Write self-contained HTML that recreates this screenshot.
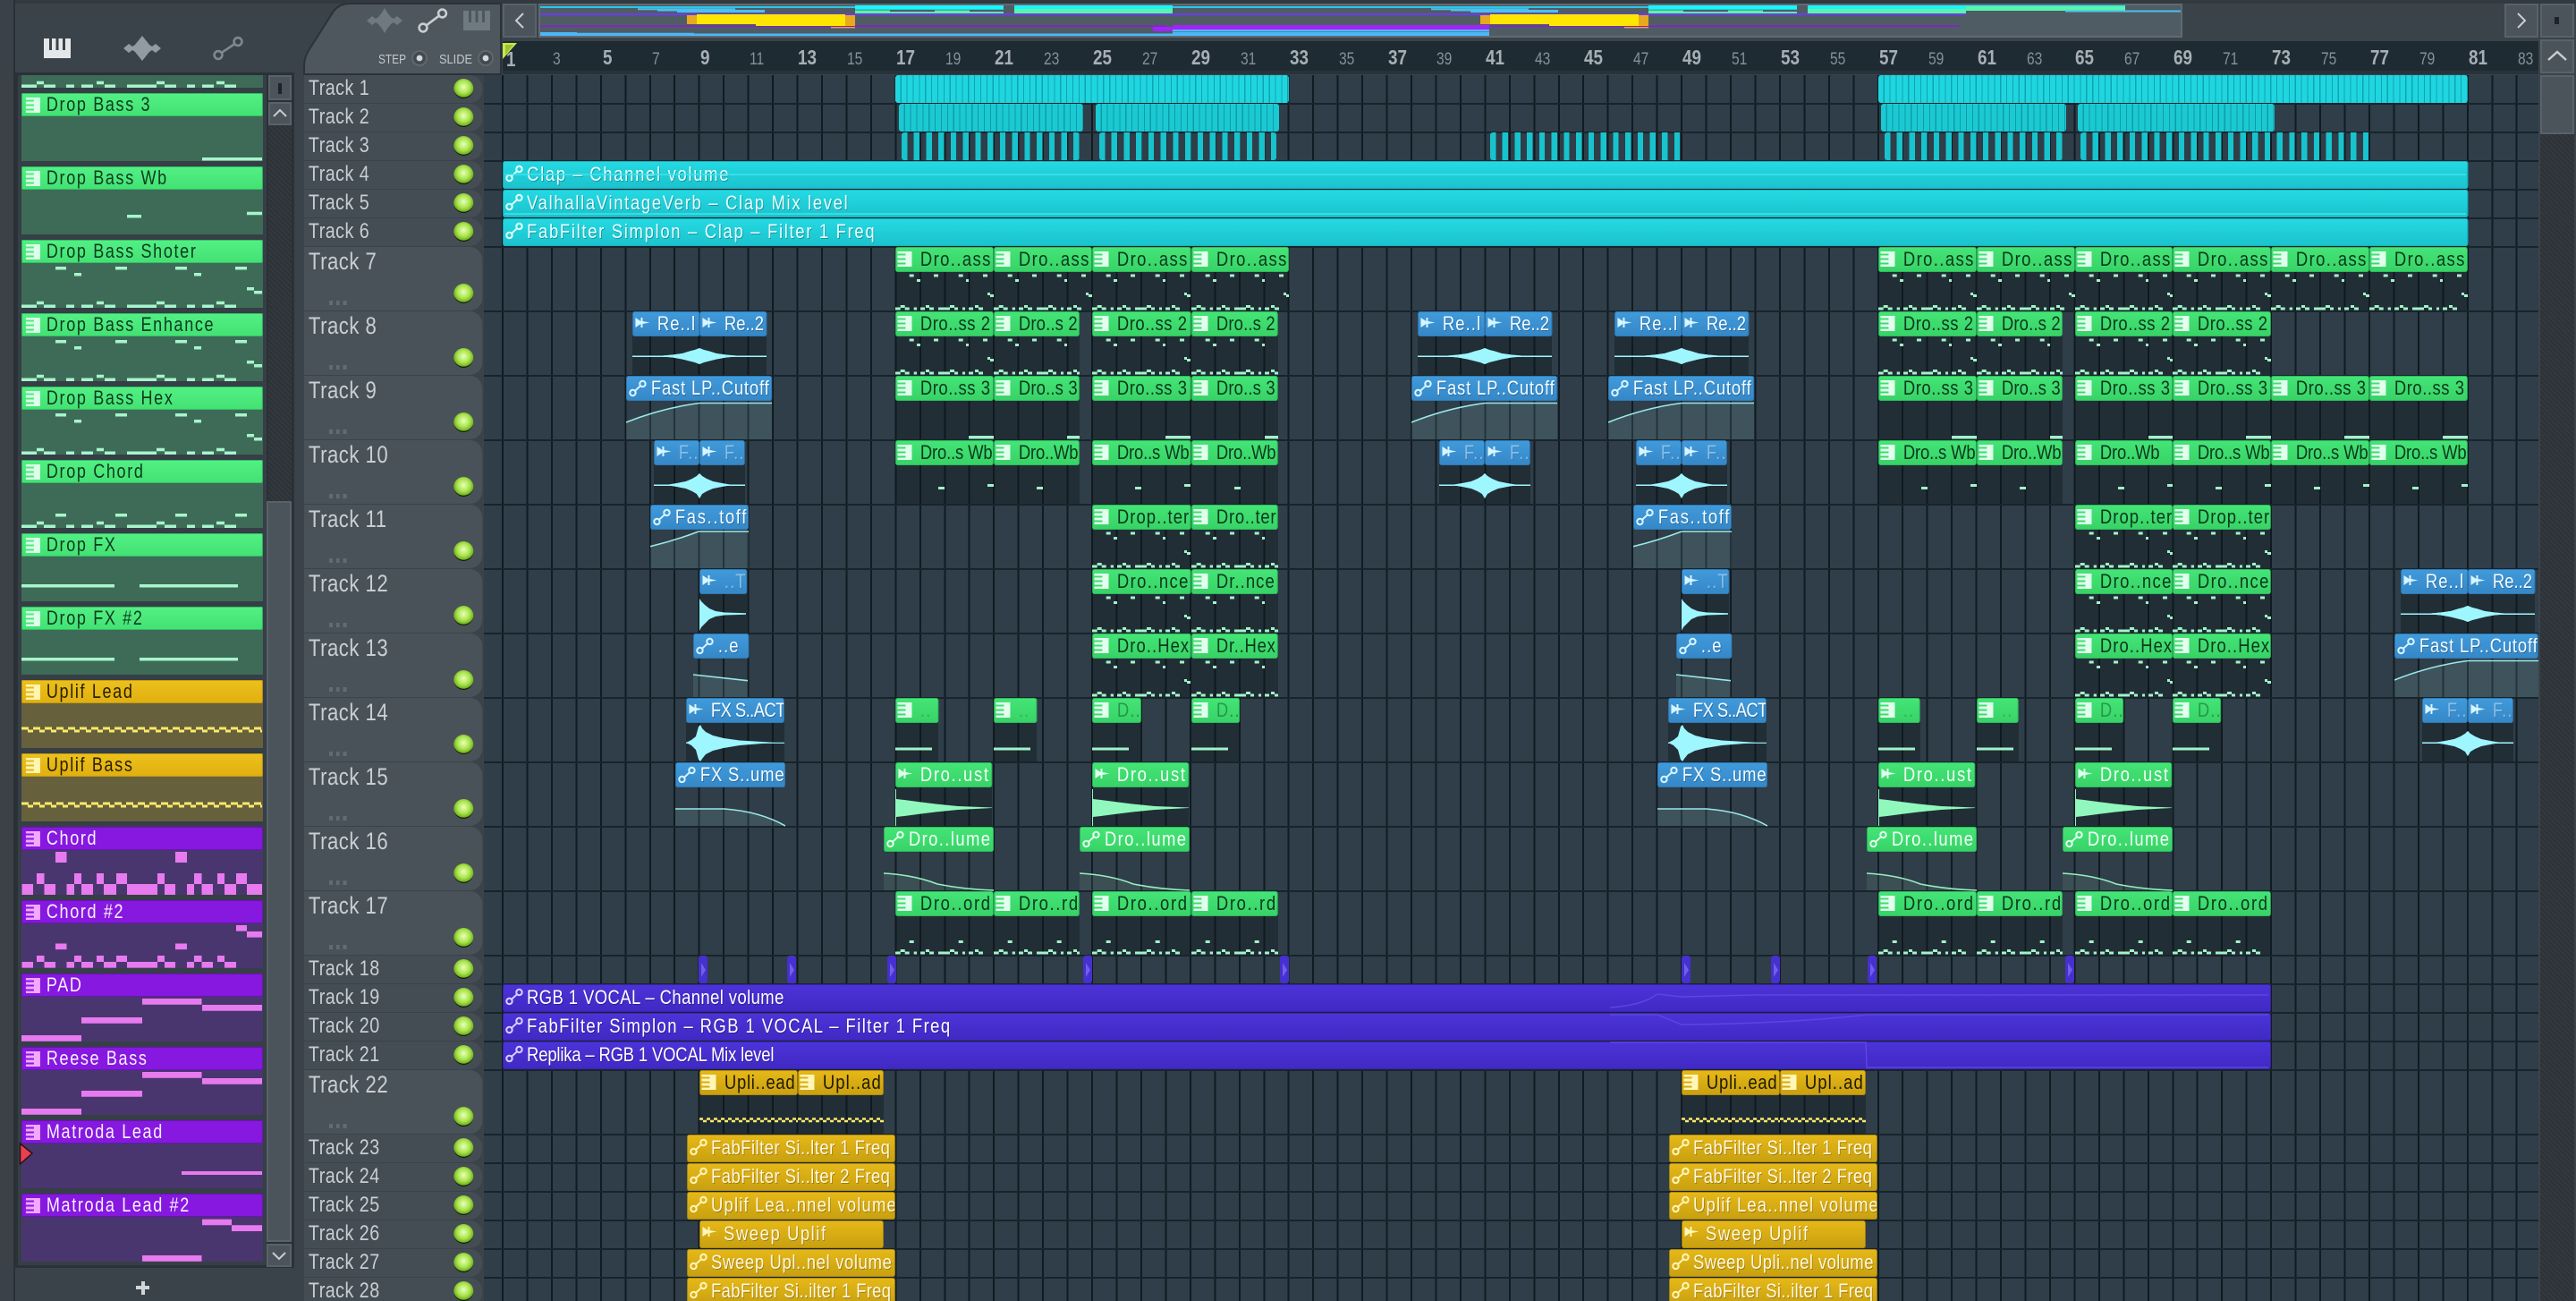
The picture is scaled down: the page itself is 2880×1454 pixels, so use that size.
<!DOCTYPE html>
<html><head><meta charset="utf-8"><title>Playlist</title>
<style>
html,body{margin:0;padding:0;width:2880px;height:1454px;overflow:hidden;background:#3b434a}
body{position:relative;font-family:"Liberation Sans",sans-serif}
div,span,svg,p{position:absolute}
p span{position:static}
p{margin:0}
#chrome{left:0;top:0;width:2880px;height:1454px}
.btn{background:#4b535b;border:2px solid #59626a;box-sizing:border-box}
.hatch{background:repeating-linear-gradient(45deg,#34393f 0 2px,#2d3237 2px 4px)}
/* condensed header bars: scaled horizontally, icons counter-scaled */
.ch p,.c p{transform:scaleX(.82);transform-origin:0 0}
svg.i{left:2.4px;top:4px;width:20px;height:18px;overflow:visible;transform:scaleX(1.2195);transform-origin:0 0}
/* channel list */
.ch{left:24px;width:270px;height:76px}
.ch p{left:0;top:0;width:329.3px;height:26px;box-sizing:border-box;border:1px solid;border-radius:2px;font-size:22px;line-height:24px;padding-left:33px;letter-spacing:2px;white-space:nowrap}
.ch svg.n{left:0;top:0;width:270px;height:76px}
.ch svg.i{left:5px;top:4px}
.ch.g{background:#3e6b57}.ch.g p{background:linear-gradient(#52f084,#44e274);border-color:#2fc062;color:#0e3a20}
.ch.y{background:#66603d}.ch.y p{background:linear-gradient(#ecc01c,#e0b010);border-color:#c69c10;color:#2a2000}
.ch.v{background:#4a366e}.ch.v p{background:#8618e0;border-color:#6c12b8;color:#f8f0ff}
.ch.g svg.i{color:#dcffe9}.ch.y svg.i{color:#fff5b0}.ch.v svg.i{color:#f3a8ff}
/* track headers */
.tr{left:340px;width:242.7px;height:31px;background:#444c54;border-radius:0 17px 17px 0/0 14px 14px 0;font-size:24px;line-height:30px;letter-spacing:.6px;color:#c9ced2;box-sizing:border-box;padding-left:6px;white-space:nowrap;transform:scaleX(.82);transform-origin:0 0}
.tr.T{height:71px;background:#4a5259;font-size:27px;line-height:33px}
.tr i{position:absolute;left:203.700px;top:4px;width:22px;height:22px;border-radius:50%;transform:scaleX(1.2195);transform-origin:0 0;background:radial-gradient(circle at 50% 42%,#eaffb8 0,#a8e44c 42%,#72b020 66%,#0f1c08 70%,#0f1c08 80%,#6a747a 84%,#58626a 100%)}
.tr.T i{top:41px}
.tr u{position:absolute;left:34px;top:60px;width:24px;height:5px;background:repeating-linear-gradient(90deg,#626b72 0 4.8px,transparent 4.8px 9.6px)}
/* grid */
#grid{left:541px;top:84px;width:2297px;height:1370px;background:#2f3e48}
#vl{left:561px;top:84px;width:2277px;height:1370px;background:repeating-linear-gradient(90deg,#101b22 0 2px,transparent 2px 27.46px)}
/* ruler */
#ruler{left:562px;top:46px;width:2276px;height:37px;background:#1f2b33;border-bottom:4px solid #27323a;box-sizing:border-box}
.n1,.n2{white-space:nowrap;transform:scaleX(.82);transform-origin:0 0}
.n1{font-size:23px;line-height:26px;top:5px;color:#a7afb6;font-weight:bold}
.n2{font-size:19px;line-height:22px;top:10px;color:#868f97}
/* clips */
.r1{top:84px}.r2{top:116px}.r3{top:148px}.r4{top:180px}.r5{top:212px}.r6{top:244px}.r7{top:276px}.r8{top:348px}.r9{top:420px}.r10{top:492px}.r11{top:564px}.r12{top:636px}.r13{top:708px}.r14{top:780px}.r15{top:852px}.r16{top:924px}.r17{top:996px}.r18{top:1068px}.r19{top:1100px}.r20{top:1132px}.r21{top:1164px}.r22{top:1196px}.r23{top:1268px}.r24{top:1300px}.r25{top:1332px}.r26{top:1364px}.r27{top:1396px}.r28{top:1428px}
.c{height:71px;background:rgba(14,22,28,.4)}
.c.a{background:transparent}
.c p{left:0;top:0;width:122%;height:28px;box-sizing:border-box;border:1px solid;border-radius:3px;font-size:22.5px;line-height:25px;padding-left:33px;letter-spacing:1.3px;white-space:nowrap;overflow:hidden}
.c svg.n{left:0;top:0;width:100%;height:72px}
.s{height:31px}.s.c{background:transparent}.s p{height:31px;line-height:28px;padding-left:32px}
.g p{background:linear-gradient(#44e476,#38d367);border-color:#2bbb5c;color:#0c381e}.g svg.i{color:#e2ffee}
.gw p{color:#f2fff6}
.b p{background:linear-gradient(#409ada,#3688c8);border-color:#2f79b5;color:#f4fbff;text-shadow:1px 1px 0 rgba(0,40,80,.35)}.b svg.i{color:#d8f5ff}
.y p{background:linear-gradient(#e6b818,#c9a010);border-color:#b08a0c;color:#1f1a00}.y svg.i{color:#fff6b8}
.yw p{color:#fff8de;text-shadow:1px 1px 0 rgba(80,60,0,.4)}
.k p{background:linear-gradient(#24d9e2,#1bc3ce);border-color:#17b3bd;color:#eaffff;text-shadow:1px 1px 0 rgba(0,70,80,.4);letter-spacing:2.05px}.k svg.i{color:#e0ffff}
.p p{background:linear-gradient(#4c33d8,#4029c4);border-color:#3a25ad;color:#fff;text-shadow:1px 1px 0 rgba(20,0,80,.4)}.p svg.i{color:#d8d0ff}
.a0 p{letter-spacing:-.7px}.a5 p{letter-spacing:-.2px}.a7 p{letter-spacing:0}.a9 p{letter-spacing:.2px}.a13 p{letter-spacing:.65px}.a16 p{letter-spacing:.9px}.a17 p{letter-spacing:1px}.a24 p{letter-spacing:1.7px}.a27 p{letter-spacing:2px}
.f{opacity:.42}
.tm{opacity:.25}
.sl{border-radius:3px;height:31px}
</style></head>
<body>
<svg width="0" height="0" style="left:0;top:0"><defs>
<path id="pi" fill="currentColor" d="M0 0H16V17H0V14.5H9V12.5H0V9.5H9V7.5H0V4.5H9V2.5H0Z"/>
<g id="au" fill="none" stroke="currentColor" stroke-width="2"><circle cx="5" cy="14" r="3.2"/><circle cx="16" cy="4" r="3.2"/><path d="M7.5 11.8L13.6 6.2"/></g>
<path id="sa" fill="currentColor" d="M1 2L7 6V2H9V6L17 7.5L9 9V13H7V9L1 13Z"/>
<g id="cl" fill="#a6f5cc"><path d="M24 72.5h17v3.5h-17zM49 72.5h13v3.5h-13zM74 72.5h9v3.5h-9zM91 72.5h13v3.5h-13zM117 72.5h12v3.5h-12zM142 72.5h33v3.5h-33zM184 72.5h13v3.5h-13zM209 72.5h9v3.5h-9zM226 72.5h13v3.5h-13zM251 72.5h13v3.5h-13zM41 68.7h8v3.6h-8zM108 68.7h8v3.6h-8zM175 68.7h9v3.6h-9zM242 68.7h9v3.6h-9z"/></g>
<g id="sh" fill="#a6f5cc"><use href="#cl"/><path d="M62 30h12v3.5h-12zM129 30h13v3.5h-13zM196 30h13v3.5h-13zM263 30h13v3.5h-13zM83 37h8v3.5h-8zM217 37h8v3.5h-8zM276 53h8v3.5h-8zM284 57h9v3.5h-9z"/></g>
<path id="d" fill="#a2f3c9" d="M15.7 30.5h5v3h-5zM43 30.5h5v3h-5zM70.7 30.5h5v3h-5zM98 30.5h5v3h-5zM24 36h4v3h-4zM79 36h3v3h-3zM103 51h3v3h-3zM106 53h4v3h-4zM0 67.5h5.7v3h-5.7zM10.7 67.5h5v3h-5zM20.7 67.5h3.3v3h-3.3zM28 67.5h5v3h-5zM38 67.5h5v3h-5zM48 67.5h13v3h-13zM66 67.5h4v3h-4zM75 67.5h3v3h-3zM82 67.5h5v3h-5zM93 67.5h5v3h-5zM5.7 65h5v3h-5zM34 65h4v3h-4zM61 65h5v3h-5zM89 65h4v3h-4z"/>
<path id="e9" fill="#a2f3c9" d="M82 67h28v3.5h-28z"/>
<path id="e10" fill="#a2f3c9" d="M48 52h7v3h-7zM103 49h7v3h-7z"/>
<path id="e14" fill="#a2f3c9" d="M0 55.5h41v3h-41z"/>
<path id="e17" fill="#a2f3c9" d="M0 67.5h5.7v3h-5.7zM10.7 67.5h5v3h-5zM20.7 67.5h3.3v3h-3.3zM28 67.5h5v3h-5zM38 67.5h5v3h-5zM48 67.5h13v3h-13zM66 67.5h4v3h-4zM75 67.5h3v3h-3zM82 67.5h5v3h-5zM93 67.5h5v3h-5zM5.7 65h5v3h-5zM34 65h4v3h-4zM61 65h5v3h-5zM89 65h4v3h-4zM15.7 55h5v3h-5zM70.7 55h5v3h-5z"/>
<g id="w1" fill="#9ef6ff"><path d="M0 49.5h150v1.5H0z"/><path d="M28 50L45 48.5L56 47L64 44.5L70 43L75 41L80 43L86 44.5L94 47L105 48.5L122 50L105 51.5L94 53.5L86 55.5L80 57L75 59L70 57L64 55.5L56 53.5L45 51.5Z"/></g>
<g id="w2" fill="#9ef6ff"><path d="M0 49.5h102v1.5H0z"/><path d="M14 50L26 48L36 46L43 43L48 40L51 37L54 40L59 43L66 46L76 48L88 50L76 52L66 54L59 57L54 60L51 65L48 60L43 57L36 54L26 52Z"/></g>
<path id="w3" fill="#9ef6ff" d="M0 33L2 36L6 40L11 44L18 47L28 48.5L52 49.3V50.7L28 51.5L18 53L11 56L6 61L2 65L0 69Z"/>
<g id="w4" fill="#9ef6ff"><path d="M0 49.7h110v1.2H0z"/><path d="M0 50L6 47L11 43L14 32L16 30L18 34L22 38L30 42L42 45L60 47.5L85 49L100 50L85 51L60 53L42 56L30 59L22 63L18 68L16 71L14 69L11 58L6 53Z"/></g>
<path id="w5" fill="#90f8bc" d="M0 30H1V41L10 42L25 44L45 46.5L70 49L108 50.5V51L70 53L45 55.5L25 58L10 60L1 61V71H0Z"/>
<g id="yd" stroke="#fbe96a" stroke-width="2.6"><path d="M0 54.5H206" stroke-dasharray="4 4"/><path d="M4 57H206" stroke-dasharray="4 4"/></g>
<g id="ov" >
<path fill="#4cc0f0" d="M713 9.3h109v2h-109zM735 11h120v1.5h-120zM757 12.5h98v1.5h-98z"/>
<path fill="#19f5ff" d="M956 6h166v4.7h-166zM1134 6h177v4h-177z"/>
<path fill="#5cf4a8" d="M956 11.5h39v3.5h-39zM995 13h127v2h-127zM1045 11.5h39v2h-39zM1134 10h177v5h-177z"/>
<path fill="#e8a820" d="M768 17h11v10h-11zM945 17h11v10h-11z"/>
<path fill="#ffe600" d="M779 16h166v11h-166zM845 27h100v2h-100z"/>
<path fill="#f0a81c" d="M929 30h27v1.4h-27zM945 27h11v2h-11z"/>
</g>
</defs></svg>

<!-- chrome -->
<svg id="chrome" viewBox="0 0 2880 1454">
<rect width="2880" height="1454" fill="#3b434a"/>
<rect width="2880" height="4" fill="#32393f"/>
<rect x="0" width="16" height="1454" fill="#3a4148"/>
<rect x="15" width="2" height="1454" fill="#2a3036"/>
<path d="M340 83V74Q340 66 344 58L372 14Q378 4 392 4H560V83Z" fill="#4e565e" stroke="#2b3238" stroke-width="2"/>
<rect x="17" y="81" width="312" height="336" fill="#2a3137"/>
<rect x="17" y="417" width="312" height="1000" fill="#2a3137"/>
<rect x="20" y="84" width="278" height="1330" fill="#363e46"/>
<!-- top-left icons -->
<rect x="49" y="43" width="30" height="22" fill="#e4e7e9"/>
<path fill="#3b434a" d="M55 43h3v13h-3zM62.5 43h3v13h-3zM70 43h3v13h-3z"/>
<path id="wv" fill="#929ba2" d="M138 54L144 49L148 52L151 50L155 45L159 40L163 45L167 50L170 52L174 49L180 54L174 59L170 56L167 58L163 63L159 68L155 63L151 58L148 56L144 59Z"/>
<g fill="none" stroke="#7f888f" stroke-width="2.6"><circle cx="244" cy="61.5" r="4.4"/><circle cx="266" cy="46.5" r="4.4"/><path d="M247.5 59L262.5 49"/></g>
<!-- header icons -->
<path fill="#6f7980" d="M410 23L416 18L420 21L423 19L427 14L430 9L433 14L437 19L440 21L444 18L450 23L444 28L440 25L437 27L433 32L430 37L427 32L423 27L420 25L416 28Z"/>
<g fill="none" stroke="#c8ced2" stroke-width="2.6"><circle cx="473" cy="31" r="4.4"/><circle cx="494.5" cy="15" r="4.4"/><path d="M476.5 28.4L491 17.6"/></g>
<rect x="518" y="12" width="30" height="22" fill="#6f7980"/>
<path fill="#4e565e" d="M524 12h3v13h-3zM531.500 12h3v13h-3zM539 12h3v13h-3z"/>
<circle cx="469" cy="65" r="8" fill="#434b52" stroke="#5f686f" stroke-width="2"/><circle cx="469" cy="65" r="3.4" fill="#d4d9dc"/>
<circle cx="543" cy="65" r="8" fill="#434b52" stroke="#5f686f" stroke-width="2"/><circle cx="543" cy="65" r="3.4" fill="#d4d9dc"/>
<text x="423" y="71" font-family="Liberation Sans,sans-serif" font-size="15" fill="#c2c8cc" textLength="31" lengthAdjust="spacingAndGlyphs">STEP</text>
<text x="491" y="71" font-family="Liberation Sans,sans-serif" font-size="15" fill="#c2c8cc" textLength="37" lengthAdjust="spacingAndGlyphs">SLIDE</text>
<!-- overview -->
<rect x="603" y="5" width="1836" height="36" fill="#505c63" stroke="#5f6a72" stroke-width="2"/>
<path fill="#28c8e8" d="M604 7h352v2h-352zM1311 7h533v2h-533z"/>
<path fill="#6a3cf0" d="M604 15h1594v2h-1594z"/>
<path fill="#8a18e0" d="M604 28.500h700v1.500h-700zM1491 28.500h700v1.500h-700z"/>
<path fill="#a024fa" d="M1289 30h22v5h-22zM1311 28h354v5h-354z"/>
<path fill="#4cb8f8" d="M604 37.500h1061v2.500h-1061zM604 36h41v2h-41zM645 36.800h131v1.500h-131zM1311 33h354v2.500h-354zM1311 36h354v4h-354z"/>
<use href="#ov"/><use href="#ov" x="887"/>
<path fill="#5cf4a8" d="M2198 7h178v5h-178z"/>
<path fill="#19f5ff" d="M2198 6h178v1.200h-178z"/>
<path fill="#4cc0f0" d="M2309 11.500h129v2h-129z"/>
</svg>

<div class="btn" style="left:562px;top:4px;width:38px;height:38px"><svg width="34" height="34" style="left:0;top:0"><path d="M21 9L13 17L21 25" fill="none" stroke="#c8ced2" stroke-width="2"/></svg></div>
<div class="btn" style="left:2800px;top:4px;width:38px;height:38px"><svg width="34" height="34" style="left:0;top:0"><path d="M13 9L21 17L13 25" fill="none" stroke="#c8ced2" stroke-width="2"/></svg></div>
<div class="btn" style="left:2840px;top:4px;width:38px;height:38px"><div style="left:14px;top:13px;width:5px;height:8px;background:#1d2328"></div></div>
<div class="btn" style="left:2840px;top:44px;width:38px;height:38px"><svg width="34" height="34" style="left:0;top:0"><path d="M7 21L17 12L27 21" fill="none" stroke="#c8ced2" stroke-width="2.4"/></svg></div>
<div class="btn" style="left:2840px;top:84px;width:38px;height:66px"></div>
<div class="hatch" style="left:2840px;top:150px;width:38px;height:1304px"></div>

<!-- left scrollbar -->
<div class="btn" style="left:300px;top:84px;width:26px;height:28px"><div style="left:9px;top:7px;width:4px;height:12px;background:#1d2328"></div></div>
<div class="btn" style="left:300px;top:114px;width:26px;height:26px"><svg width="22" height="22" style="left:0;top:0"><path d="M4 14L11 7L18 14" fill="none" stroke="#c8ced2" stroke-width="2"/></svg></div>
<div class="hatch" style="left:300px;top:140px;width:26px;height:420px"></div>
<div class="btn" style="left:298px;top:560px;width:28px;height:828px"></div>
<div class="btn" style="left:298px;top:1390px;width:28px;height:26px"><svg width="24" height="22" style="left:0;top:0"><path d="M5 8L12 15L19 8" fill="none" stroke="#c8ced2" stroke-width="2"/></svg></div>
<div style="left:152px;top:1437px;width:15px;height:4px;background:#d0d5d8"></div>
<div style="left:157.500px;top:1432px;width:4px;height:15px;background:#d0d5d8"></div>

<!-- channels -->
<div class="ch g" style="top:22px;height:76px;clip-path:inset(62px 0 0 0)"><svg class="n" viewBox="24 0 270 76"><use href="#cl"/></svg></div>
<div class="ch g" style="top:104px"><p><svg class="i"><use href="#pi"/></svg>Drop Bass 3</p><svg class="n" viewBox="24 0 270 76"><path fill="#a6f5cc" d="M226 72h67v3.500h-67z"/></svg></div>
<div class="ch g" style="top:186px"><p><svg class="i"><use href="#pi"/></svg>Drop Bass Wb</p><svg class="n" viewBox="24 0 270 76"><path fill="#a6f5cc" d="M142 54h16v3.500h-16zM276 50.700h17v3.500h-17z"/></svg></div>
<div class="ch g" style="top:268px"><p><svg class="i"><use href="#pi"/></svg>Drop Bass Shoter</p><svg class="n" viewBox="24 0 270 76"><use href="#sh"/></svg></div>
<div class="ch g" style="top:350px"><p><svg class="i"><use href="#pi"/></svg>Drop Bass Enhance</p><svg class="n" viewBox="24 0 270 76"><use href="#sh"/></svg></div>
<div class="ch g" style="top:432px"><p><svg class="i"><use href="#pi"/></svg>Drop Bass Hex</p><svg class="n" viewBox="24 0 270 76"><use href="#sh"/></svg></div>
<div class="ch g" style="top:514px"><p><svg class="i"><use href="#pi"/></svg>Drop Chord</p><svg class="n" viewBox="24 0 270 76"><use href="#cl"/><path fill="#a6f5cc" d="M62 60h12v3.500h-12zM129 60h13v3.500h-13zM196 60h13v3.500h-13zM263 60h13v3.500h-13z"/></svg></div>
<div class="ch g" style="top:596px"><p><svg class="i"><use href="#pi"/></svg>Drop FX</p><svg class="n" viewBox="24 0 270 76"><path fill="#a6f5cc" d="M24 57h104v3.500H24zM156 57h110v3.500H156z"/></svg></div>
<div class="ch g" style="top:678px"><p><svg class="i"><use href="#pi"/></svg>Drop FX #2</p><svg class="n" viewBox="24 0 270 76"><path fill="#a6f5cc" d="M24 57h104v3.500H24zM156 57h110v3.500H156z"/></svg></div>
<div class="ch y" style="top:760px"><p><svg class="i"><use href="#pi"/></svg>Uplif Lead</p><svg class="n" viewBox="24 0 270 76"><g stroke="#fbe96a" stroke-width="3"><path d="M24 54H293" stroke-dasharray="8 5"/><path d="M31 57H293" stroke-dasharray="6 7"/></g></svg></div>
<div class="ch y" style="top:842px"><p><svg class="i"><use href="#pi"/></svg>Uplif Bass</p><svg class="n" viewBox="24 0 270 76"><g stroke="#fbe96a" stroke-width="3"><path d="M24 56H293" stroke-dasharray="8 5"/><path d="M31 59H293" stroke-dasharray="6 7"/></g></svg></div>
<div class="ch v" style="top:924px"><p><svg class="i"><use href="#pi"/></svg>Chord</p><svg class="n" viewBox="24 0 270 76"><path fill="#e87af0" d="M62 28h12.500v12H62zM196 28h13v12h-13zM41 52h8.500v12H41zM83 52h8v12h-8zM108 52h8v12h-8zM130 52h12v12h-12zM176 52h8v12h-8zM217 52h8.500v12H217zM243 52h8v12h-8zM264 52h12v12h-12zM24.500 64h12.500v12H24.500zM49.500 64h12.500v12H49.500zM74.500 64h8.500v12h-8.500zM91 64h13v12H91zM116 64h14v12h-14zM142 64h34v12h-34zM184 64h12v12h-12zM209 64h8v12h-8zM225.500 64h12.500v12h-12.500zM251 64h13v12h-13zM276 64h17v12h-17z"/></svg></div>
<div class="ch v" style="top:1006px"><p><svg class="i"><use href="#pi"/></svg>Chord #2</p><svg class="n" viewBox="24 0 270 76"><path fill="#e87af0" d="M264 28h12v6.600h-12zM276 35h17v6.600h-17zM62 48.500h12.500v6.600H62zM196 48.500h13v6.600h-13zM41 62h8.500v7H41zM83 62h8v7h-8zM108 62h8v7h-8zM130 62h12v7h-12zM176 62h8v7h-8zM217 62h8.500v7H217zM243 62h8v7h-8zM24.500 69h12.500v6.600H24.500zM49.500 69h12.500v6.600H49.500zM74.500 69h8.500v6.600h-8.500zM91 69h13v6.600H91zM116 69h14v6.600h-14zM142 69h34v6.600h-34zM184 69h12v6.600h-12zM209 69h8v6.600h-8zM225.500 69h12.500v6.600h-12.500zM251 69h13v6.600h-13z"/></svg></div>
<div class="ch v" style="top:1088px"><p><svg class="i"><use href="#pi"/></svg>PAD</p><svg class="n" viewBox="24 0 270 76"><path fill="#e87af0" d="M159 28h66.500v6.700H159zM226 35h67v6.700h-67zM91 49h68v6.700H91zM24 69h67v6.700H24z"/></svg></div>
<div class="ch v" style="top:1170px"><p><svg class="i"><use href="#pi"/></svg>Reese Bass</p><svg class="n" viewBox="24 0 270 76"><path fill="#e87af0" d="M159 28h66.500v6.700H159zM226 35h67v6.700h-67zM91 49h68v6.700H91zM24 69h67v6.700H24z"/></svg></div>
<div class="ch v" style="top:1252px"><p><svg class="i"><use href="#pi"/></svg>Matroda Lead</p><svg class="n" viewBox="24 0 270 76"><path fill="#e87af0" d="M203 57h90v4h-90z"/></svg></div>
<div class="ch v" style="top:1334px"><p><svg class="i"><use href="#pi"/></svg>Matroda Lead #2</p><svg class="n" viewBox="24 0 270 76"><path fill="#e87af0" d="M226 28.600h33v6.700h-33zM259 35.300h34v6.700h-34zM159 69h66.500v6.700H159z"/></svg></div>
<svg width="20" height="28" style="left:21px;top:1276px"><path d="M1.500 2L15 13L1.500 25Z" fill="#e8404f" stroke="#2a1014" stroke-width="1.500"/></svg>

<!-- track headers -->
<div class="tr r1">Track 1<i></i></div><div class="tr r2">Track 2<i></i></div><div class="tr r3">Track 3<i></i></div><div class="tr r4">Track 4<i></i></div><div class="tr r5">Track 5<i></i></div><div class="tr r6">Track 6<i></i></div>
<div class="tr T r7">Track 7<i></i><u></u></div><div class="tr T r8">Track 8<i></i><u></u></div><div class="tr T r9">Track 9<i></i><u></u></div><div class="tr T r10">Track 10<i></i><u></u></div><div class="tr T r11">Track 11<i></i><u></u></div><div class="tr T r12">Track 12<i></i><u></u></div><div class="tr T r13">Track 13<i></i><u></u></div><div class="tr T r14">Track 14<i></i><u></u></div><div class="tr T r15">Track 15<i></i><u></u></div><div class="tr T r16">Track 16<i></i><u></u></div><div class="tr T r17">Track 17<i></i><u></u></div>
<div class="tr r18">Track 18<i></i></div><div class="tr r19">Track 19<i></i></div><div class="tr r20">Track 20<i></i></div><div class="tr r21">Track 21<i></i></div>
<div class="tr T r22">Track 22<i></i><u></u></div>
<div class="tr r23">Track 23<i></i></div><div class="tr r24">Track 24<i></i></div><div class="tr r25">Track 25<i></i></div><div class="tr r26">Track 26<i></i></div><div class="tr r27">Track 27<i></i></div><div class="tr r28">Track 28<i></i></div>

<!-- ruler -->
<div id="ruler"></div>
<div id="rn" style="left:0;top:46px;width:2838px;height:36px">
<span class="n1" style="left:566px;top:7px">1</span>
<span class="n2" style="left:618px">3</span><span class="n1" style="left:674px">5</span><span class="n2" style="left:729px">7</span><span class="n1" style="left:783px">9</span><span class="n2" style="left:838px">11</span><span class="n1" style="left:892px">13</span><span class="n2" style="left:947px">15</span><span class="n1" style="left:1002px">17</span><span class="n2" style="left:1057px">19</span><span class="n1" style="left:1112px">21</span><span class="n2" style="left:1167px">23</span><span class="n1" style="left:1222px">25</span><span class="n2" style="left:1277px">27</span><span class="n1" style="left:1332px">29</span><span class="n2" style="left:1387px">31</span><span class="n1" style="left:1442px">33</span><span class="n2" style="left:1497px">35</span><span class="n1" style="left:1552px">37</span><span class="n2" style="left:1606px">39</span><span class="n1" style="left:1661px">41</span><span class="n2" style="left:1716px">43</span><span class="n1" style="left:1771px">45</span><span class="n2" style="left:1826px">47</span><span class="n1" style="left:1881px">49</span><span class="n2" style="left:1936px">51</span><span class="n1" style="left:1991px">53</span><span class="n2" style="left:2046px">55</span><span class="n1" style="left:2101px">57</span><span class="n2" style="left:2156px">59</span><span class="n1" style="left:2211px">61</span><span class="n2" style="left:2266px">63</span><span class="n1" style="left:2320px">65</span><span class="n2" style="left:2375px">67</span><span class="n1" style="left:2430px">69</span><span class="n2" style="left:2485px">71</span><span class="n1" style="left:2540px">73</span><span class="n2" style="left:2595px">75</span><span class="n1" style="left:2650px">77</span><span class="n2" style="left:2705px">79</span><span class="n1" style="left:2760px">81</span><span class="n2" style="left:2815px">83</span>
</div>
<svg width="24" height="24" style="left:562px;top:48px"><path d="M0 0H16L0 18Z" fill="#c4e84e"/><path d="M3 2H12L3 13Z" fill="#9cc234"/></svg>

<!-- grid -->
<div id="grid"></div>
<div id="vl"></div>
<svg width="2297" height="1370" style="left:541px;top:84px"><path stroke="#18242c" stroke-width="2" d="M0 32H2297M0 64H2297M0 96H2297M0 128H2297M0 160H2297M0 192H2297M0 264H2297M0 336H2297M0 408H2297M0 480H2297M0 552H2297M0 624H2297M0 696H2297M0 768H2297M0 840H2297M0 912H2297M0 984H2297M0 1016H2297M0 1048H2297M0 1080H2297M0 1112H2297M0 1184H2297M0 1216H2297M0 1248H2297M0 1280H2297M0 1312H2297M0 1344H2297"/></svg>

<!-- slices rows 1-3 -->
<div class="sl r1" style="left:1001px;width:440px;background:repeating-linear-gradient(90deg,#1fd6e0 0 5.7px,#0fa4ae 5.7px 6.865px)"></div>
<div class="sl r1" style="left:2100px;width:659px;background:repeating-linear-gradient(90deg,#1fd6e0 0 5.7px,#0fa4ae 5.7px 6.865px)"></div>
<div class="sl r2" style="left:1005px;width:206px;background:repeating-linear-gradient(90deg,#1bc9d3 0 5.7px,#0e9ca6 5.7px 6.865px)"></div>
<div class="sl r2" style="left:1225px;width:205px;background:repeating-linear-gradient(90deg,#1bc9d3 0 5.7px,#0e9ca6 5.7px 6.865px)"></div>
<div class="sl r2" style="left:2103px;width:207px;background:repeating-linear-gradient(90deg,#1bc9d3 0 5.7px,#0e9ca6 5.7px 6.865px)"></div>
<div class="sl r2" style="left:2323px;width:220px;background:repeating-linear-gradient(90deg,#1bc9d3 0 5.7px,#0e9ca6 5.7px 6.865px)"></div>
<div class="sl r3" style="left:1008px;width:199px;background:repeating-linear-gradient(90deg,#17c3cd 0 6.3px,transparent 6.3px 13.73px)"></div>
<div class="sl r3" style="left:1229px;width:198px;background:repeating-linear-gradient(90deg,#17c3cd 0 6.3px,transparent 6.3px 13.73px)"></div>
<div class="sl r3" style="left:1666px;width:215px;background:repeating-linear-gradient(90deg,#17c3cd 0 6.3px,transparent 6.3px 13.73px)"></div>
<div class="sl r3" style="left:2107px;width:199px;background:repeating-linear-gradient(90deg,#17c3cd 0 6.3px,transparent 6.3px 13.73px)"></div>
<div class="sl r3" style="left:2326px;width:324px;background:repeating-linear-gradient(90deg,#17c3cd 0 6.3px,transparent 6.3px 13.73px)"></div>

<!-- cyan automation -->
<div class="c s k r4" style="left:562px;width:2197px"><p><svg class="i"><use href="#au"/></svg>Clap – Channel volume</p></div>
<div class="c s k r5" style="left:562px;width:2197px"><p><svg class="i"><use href="#au"/></svg>ValhallaVintageVerb – Clap Mix level</p></div>
<div class="c s k r6" style="left:562px;width:2197px"><p><svg class="i"><use href="#au"/></svg>FabFilter Simplon – Clap – Filter 1 Freq</p></div>

<!-- row 7 -->
<div class="c g a24 r7" style="left:1001px;width:110px"><p><svg class="i"><use href="#pi"/></svg>Dro..ass</p><svg class="n"><use href="#d"/></svg></div>
<div class="c g a24 r7" style="left:1111px;width:110px"><p><svg class="i"><use href="#pi"/></svg>Dro..ass</p><svg class="n"><use href="#d"/></svg></div>
<div class="c g a24 r7" style="left:1221px;width:111px"><p><svg class="i"><use href="#pi"/></svg>Dro..ass</p><svg class="n"><use href="#d"/></svg></div>
<div class="c g a24 r7" style="left:1332px;width:109px"><p><svg class="i"><use href="#pi"/></svg>Dro..ass</p><svg class="n"><use href="#d"/></svg></div>
<div class="c g a24 r7" style="left:2100px;width:110px"><p><svg class="i"><use href="#pi"/></svg>Dro..ass</p><svg class="n"><use href="#d"/></svg></div>
<div class="c g a24 r7" style="left:2210px;width:110px"><p><svg class="i"><use href="#pi"/></svg>Dro..ass</p><svg class="n"><use href="#d"/></svg></div>
<div class="c g a24 r7" style="left:2320px;width:109px"><p><svg class="i"><use href="#pi"/></svg>Dro..ass</p><svg class="n"><use href="#d"/></svg></div>
<div class="c g a24 r7" style="left:2429px;width:110px"><p><svg class="i"><use href="#pi"/></svg>Dro..ass</p><svg class="n"><use href="#d"/></svg></div>
<div class="c g a24 r7" style="left:2539px;width:110px"><p><svg class="i"><use href="#pi"/></svg>Dro..ass</p><svg class="n"><use href="#d"/></svg></div>
<div class="c g a24 r7" style="left:2649px;width:110px"><p><svg class="i"><use href="#pi"/></svg>Dro..ass</p><svg class="n"><use href="#d"/></svg></div>

<!-- row 8 -->
<div class="c b r8" style="left:707px;width:75px"><svg class="n" style="width:150px"><use href="#w1"/></svg><p><svg class="i"><use href="#sa"/></svg>Re..l</p></div>
<div class="c b a7 r8" style="left:782px;width:75px"><svg class="n" style="left:-75px;width:150px"><use href="#w1"/></svg><p><svg class="i"><use href="#sa"/></svg>Re..2</p></div>
<div class="c b r8" style="left:1585px;width:75px"><svg class="n" style="width:150px"><use href="#w1"/></svg><p><svg class="i"><use href="#sa"/></svg>Re..l</p></div>
<div class="c b a7 r8" style="left:1660px;width:75px"><svg class="n" style="left:-75px;width:150px"><use href="#w1"/></svg><p><svg class="i"><use href="#sa"/></svg>Re..2</p></div>
<div class="c b r8" style="left:1805px;width:75px"><svg class="n" style="width:150px"><use href="#w1"/></svg><p><svg class="i"><use href="#sa"/></svg>Re..l</p></div>
<div class="c b a7 r8" style="left:1880px;width:75px"><svg class="n" style="left:-75px;width:150px"><use href="#w1"/></svg><p><svg class="i"><use href="#sa"/></svg>Re..2</p></div>
<div class="c g a13 r8" style="left:1001px;width:110px"><p><svg class="i"><use href="#pi"/></svg>Dro..ss 2</p><svg class="n"><use href="#d"/></svg></div>
<div class="c g a9 r8" style="left:1111px;width:96px"><p><svg class="i"><use href="#pi"/></svg>Dro..s 2</p><svg class="n"><use href="#d"/></svg></div>
<div class="c g a13 r8" style="left:1221px;width:111px"><p><svg class="i"><use href="#pi"/></svg>Dro..ss 2</p><svg class="n"><use href="#d"/></svg></div>
<div class="c g a9 r8" style="left:1332px;width:97px"><p><svg class="i"><use href="#pi"/></svg>Dro..s 2</p><svg class="n"><use href="#d"/></svg></div>
<div class="c g a13 r8" style="left:2100px;width:110px"><p><svg class="i"><use href="#pi"/></svg>Dro..ss 2</p><svg class="n"><use href="#d"/></svg></div>
<div class="c g a9 r8" style="left:2210px;width:96px"><p><svg class="i"><use href="#pi"/></svg>Dro..s 2</p><svg class="n"><use href="#d"/></svg></div>
<div class="c g a13 r8" style="left:2320px;width:109px"><p><svg class="i"><use href="#pi"/></svg>Dro..ss 2</p><svg class="n"><use href="#d"/></svg></div>
<div class="c g a13 r8" style="left:2429px;width:110px"><p><svg class="i"><use href="#pi"/></svg>Dro..ss 2</p><svg class="n"><use href="#d"/></svg></div>

<!-- row 9 -->
<div class="c a b a17 r9" style="left:700px;width:163px"><svg class="n"><path d="M0 52Q40 36 82 30.500H163V71H0Z" fill="rgba(170,240,240,.12)"/><path d="M0 52Q40 36 82 30.500H163" fill="none" stroke="#9ae8ea" stroke-width="1.600"/></svg><p><svg class="i"><use href="#au"/></svg>Fast LP..Cutoff</p></div>
<div class="c a b a17 r9" style="left:1578px;width:163px"><svg class="n"><path d="M0 52Q40 36 82 30.500H163V71H0Z" fill="rgba(170,240,240,.12)"/><path d="M0 52Q40 36 82 30.500H163" fill="none" stroke="#9ae8ea" stroke-width="1.600"/></svg><p><svg class="i"><use href="#au"/></svg>Fast LP..Cutoff</p></div>
<div class="c a b a17 r9" style="left:1798px;width:163px"><svg class="n"><path d="M0 52Q40 36 82 30.500H163V71H0Z" fill="rgba(170,240,240,.12)"/><path d="M0 52Q40 36 82 30.500H163" fill="none" stroke="#9ae8ea" stroke-width="1.600"/></svg><p><svg class="i"><use href="#au"/></svg>Fast LP..Cutoff</p></div>
<div class="c g a13 r9" style="left:1001px;width:110px"><p><svg class="i"><use href="#pi"/></svg>Dro..ss 3</p><svg class="n"><use href="#e9"/></svg></div>
<div class="c g a9 r9" style="left:1111px;width:96px"><p><svg class="i"><use href="#pi"/></svg>Dro..s 3</p><svg class="n"><use href="#e9"/></svg></div>
<div class="c g a13 r9" style="left:1221px;width:111px"><p><svg class="i"><use href="#pi"/></svg>Dro..ss 3</p><svg class="n"><use href="#e9"/></svg></div>
<div class="c g a9 r9" style="left:1332px;width:97px"><p><svg class="i"><use href="#pi"/></svg>Dro..s 3</p><svg class="n"><use href="#e9"/></svg></div>
<div class="c g a13 r9" style="left:2100px;width:110px"><p><svg class="i"><use href="#pi"/></svg>Dro..ss 3</p><svg class="n"><use href="#e9"/></svg></div>
<div class="c g a9 r9" style="left:2210px;width:96px"><p><svg class="i"><use href="#pi"/></svg>Dro..s 3</p><svg class="n"><use href="#e9"/></svg></div>
<div class="c g a13 r9" style="left:2320px;width:109px"><p><svg class="i"><use href="#pi"/></svg>Dro..ss 3</p><svg class="n"><use href="#e9"/></svg></div>
<div class="c g a13 r9" style="left:2429px;width:110px"><p><svg class="i"><use href="#pi"/></svg>Dro..ss 3</p><svg class="n"><use href="#e9"/></svg></div>
<div class="c g a13 r9" style="left:2539px;width:110px"><p><svg class="i"><use href="#pi"/></svg>Dro..ss 3</p><svg class="n"><use href="#e9"/></svg></div>
<div class="c g a13 r9" style="left:2649px;width:110px"><p><svg class="i"><use href="#pi"/></svg>Dro..ss 3</p><svg class="n"><use href="#e9"/></svg></div>

<!-- row 10 -->
<div class="c b r10" style="left:731px;width:51px"><svg class="n" style="width:102px"><use href="#w2"/></svg><p><svg class="i"><use href="#sa"/></svg><span class="f">F..</span></p></div>
<div class="c b r10" style="left:782px;width:51px"><svg class="n" style="left:-51px;width:102px"><use href="#w2"/></svg><p><svg class="i"><use href="#sa"/></svg><span class="f">F..</span></p></div>
<div class="c b r10" style="left:1609px;width:51px"><svg class="n" style="width:102px"><use href="#w2"/></svg><p><svg class="i"><use href="#sa"/></svg><span class="f">F..</span></p></div>
<div class="c b r10" style="left:1660px;width:51px"><svg class="n" style="left:-51px;width:102px"><use href="#w2"/></svg><p><svg class="i"><use href="#sa"/></svg><span class="f">F..</span></p></div>
<div class="c b r10" style="left:1829px;width:51px"><svg class="n" style="width:102px"><use href="#w2"/></svg><p><svg class="i"><use href="#sa"/></svg><span class="f">F..</span></p></div>
<div class="c b r10" style="left:1880px;width:51px"><svg class="n" style="left:-51px;width:102px"><use href="#w2"/></svg><p><svg class="i"><use href="#sa"/></svg><span class="f">F..</span></p></div>
<div class="c g a5 r10" style="left:1001px;width:110px"><p><svg class="i"><use href="#pi"/></svg>Dro..s Wb</p><svg class="n"><use href="#e10"/></svg></div>
<div class="c g a5 r10" style="left:1111px;width:96px"><p><svg class="i"><use href="#pi"/></svg>Dro..Wb</p><svg class="n"><use href="#e10"/></svg></div>
<div class="c g a5 r10" style="left:1221px;width:111px"><p><svg class="i"><use href="#pi"/></svg>Dro..s Wb</p><svg class="n"><use href="#e10"/></svg></div>
<div class="c g a5 r10" style="left:1332px;width:97px"><p><svg class="i"><use href="#pi"/></svg>Dro..Wb</p><svg class="n"><use href="#e10"/></svg></div>
<div class="c g a5 r10" style="left:2100px;width:110px"><p><svg class="i"><use href="#pi"/></svg>Dro..s Wb</p><svg class="n"><use href="#e10"/></svg></div>
<div class="c g a5 r10" style="left:2210px;width:96px"><p><svg class="i"><use href="#pi"/></svg>Dro..Wb</p><svg class="n"><use href="#e10"/></svg></div>
<div class="c g a5 r10" style="left:2320px;width:109px"><p><svg class="i"><use href="#pi"/></svg>Dro..Wb</p><svg class="n"><use href="#e10"/></svg></div>
<div class="c g a5 r10" style="left:2429px;width:110px"><p><svg class="i"><use href="#pi"/></svg>Dro..s Wb</p><svg class="n"><use href="#e10"/></svg></div>
<div class="c g a5 r10" style="left:2539px;width:110px"><p><svg class="i"><use href="#pi"/></svg>Dro..s Wb</p><svg class="n"><use href="#e10"/></svg></div>
<div class="c g a5 r10" style="left:2649px;width:110px"><p><svg class="i"><use href="#pi"/></svg>Dro..s Wb</p><svg class="n"><use href="#e10"/></svg></div>

<!-- row 11 -->
<div class="c a b a27 r11" style="left:727px;width:110px"><svg class="n"><path d="M0 46.700Q28 40 54 30H110V71H0Z" fill="rgba(170,240,240,.12)"/><path d="M0 46.700Q28 40 54 30H110" fill="none" stroke="#9ae8ea" stroke-width="1.600"/></svg><p><svg class="i"><use href="#au"/></svg>Fas..toff</p></div>
<div class="c a b a27 r11" style="left:1826px;width:110px"><svg class="n"><path d="M0 46.700Q28 40 54 30H110V71H0Z" fill="rgba(170,240,240,.12)"/><path d="M0 46.700Q28 40 54 30H110" fill="none" stroke="#9ae8ea" stroke-width="1.600"/></svg><p><svg class="i"><use href="#au"/></svg>Fas..toff</p></div>
<div class="c g r11" style="left:1221px;width:111px"><p><svg class="i"><use href="#pi"/></svg>Drop..ter</p><svg class="n"><use href="#d"/></svg></div>
<div class="c g a16 r11" style="left:1332px;width:97px"><p><svg class="i"><use href="#pi"/></svg>Dro..ter</p><svg class="n"><use href="#d"/></svg></div>
<div class="c g r11" style="left:2320px;width:109px"><p><svg class="i"><use href="#pi"/></svg>Drop..ter</p><svg class="n"><use href="#d"/></svg></div>
<div class="c g r11" style="left:2429px;width:110px"><p><svg class="i"><use href="#pi"/></svg>Drop..ter</p><svg class="n"><use href="#d"/></svg></div>

<!-- row 12 -->
<div class="c b r12" style="left:782px;width:53px"><svg class="n"><use href="#w3"/></svg><p><svg class="i"><use href="#sa"/></svg><span class="f">..T</span></p></div>
<div class="c b r12" style="left:1880px;width:53px"><svg class="n"><use href="#w3"/></svg><p><svg class="i"><use href="#sa"/></svg><span class="f">..T</span></p></div>
<div class="c b r12" style="left:2684px;width:75px"><svg class="n" style="width:150px"><use href="#w1"/></svg><p><svg class="i"><use href="#sa"/></svg>Re..l</p></div>
<div class="c b a7 r12" style="left:2759px;width:75px"><svg class="n" style="left:-75px;width:150px"><use href="#w1"/></svg><p><svg class="i"><use href="#sa"/></svg>Re..2</p></div>
<div class="c g a24 r12" style="left:1221px;width:111px"><p><svg class="i"><use href="#pi"/></svg>Dro..nce</p><svg class="n"><use href="#d"/></svg></div>
<div class="c g r12" style="left:1332px;width:97px"><p><svg class="i"><use href="#pi"/></svg>Dr..nce</p><svg class="n"><use href="#d"/></svg></div>
<div class="c g a24 r12" style="left:2320px;width:109px"><p><svg class="i"><use href="#pi"/></svg>Dro..nce</p><svg class="n"><use href="#d"/></svg></div>
<div class="c g a24 r12" style="left:2429px;width:110px"><p><svg class="i"><use href="#pi"/></svg>Dro..nce</p><svg class="n"><use href="#d"/></svg></div>

<!-- row 13 -->
<div class="c a b r13" style="left:775px;width:62px"><svg class="n"><path d="M0 46L61 52.700V71H0Z" fill="rgba(170,240,240,.12)"/><path d="M0 46L61 52.700" fill="none" stroke="#9ae8ea" stroke-width="1.600"/></svg><p><svg class="i"><use href="#au"/></svg>..e</p></div>
<div class="c a b r13" style="left:1874px;width:62px"><svg class="n"><path d="M0 46L61 52.700V71H0Z" fill="rgba(170,240,240,.12)"/><path d="M0 46L61 52.700" fill="none" stroke="#9ae8ea" stroke-width="1.600"/></svg><p><svg class="i"><use href="#au"/></svg>..e</p></div>
<div class="c a b a17 r13" style="left:2677px;width:161px"><svg class="n"><path d="M0 52Q40 36 82 30.500H163V71H0Z" fill="rgba(170,240,240,.12)"/><path d="M0 52Q40 36 82 30.500H163" fill="none" stroke="#9ae8ea" stroke-width="1.600"/></svg><p><svg class="i"><use href="#au"/></svg>Fast LP..Cutoff</p></div>
<div class="c g r13" style="left:1221px;width:111px"><p><svg class="i"><use href="#pi"/></svg>Dro..Hex</p><svg class="n"><use href="#d"/></svg></div>
<div class="c g a16 r13" style="left:1332px;width:97px"><p><svg class="i"><use href="#pi"/></svg>Dr..Hex</p><svg class="n"><use href="#d"/></svg></div>
<div class="c g r13" style="left:2320px;width:109px"><p><svg class="i"><use href="#pi"/></svg>Dro..Hex</p><svg class="n"><use href="#d"/></svg></div>
<div class="c g r13" style="left:2429px;width:110px"><p><svg class="i"><use href="#pi"/></svg>Dro..Hex</p><svg class="n"><use href="#d"/></svg></div>

<!-- row 14 -->
<div class="c b a0 r14" style="left:767px;width:110px"><svg class="n"><use href="#w4"/></svg><p><svg class="i"><use href="#sa"/></svg>FX S..ACT</p></div>
<div class="c b a0 r14" style="left:1865px;width:110px"><svg class="n"><use href="#w4"/></svg><p><svg class="i"><use href="#sa"/></svg>FX S..ACT</p></div>
<div class="c b r14" style="left:2708px;width:51px"><svg class="n" style="width:102px"><use href="#w2"/></svg><p><svg class="i"><use href="#sa"/></svg><span class="f">F..</span></p></div>
<div class="c b r14" style="left:2759px;width:51px"><svg class="n" style="left:-51px;width:102px"><use href="#w2"/></svg><p><svg class="i"><use href="#sa"/></svg><span class="f">F..</span></p></div>
<div class="c g r14" style="left:1001px;width:48px"><p><svg class="i"><use href="#pi"/></svg><span class="tm">..</span></p><svg class="n"><use href="#e14"/></svg></div>
<div class="c g r14" style="left:1111px;width:48px"><p><svg class="i"><use href="#pi"/></svg><span class="tm">..</span></p><svg class="n"><use href="#e14"/></svg></div>
<div class="c g r14" style="left:1221px;width:55px"><p><svg class="i"><use href="#pi"/></svg><span class="f">D..</span></p><svg class="n"><use href="#e14"/></svg></div>
<div class="c g r14" style="left:1332px;width:54px"><p><svg class="i"><use href="#pi"/></svg><span class="f">D..</span></p><svg class="n"><use href="#e14"/></svg></div>
<div class="c g r14" style="left:2100px;width:47px"><p><svg class="i"><use href="#pi"/></svg><span class="tm">..</span></p><svg class="n"><use href="#e14"/></svg></div>
<div class="c g r14" style="left:2210px;width:47px"><p><svg class="i"><use href="#pi"/></svg><span class="tm">..</span></p><svg class="n"><use href="#e14"/></svg></div>
<div class="c g r14" style="left:2320px;width:54px"><p><svg class="i"><use href="#pi"/></svg><span class="f">D..</span></p><svg class="n"><use href="#e14"/></svg></div>
<div class="c g r14" style="left:2429px;width:54px"><p><svg class="i"><use href="#pi"/></svg><span class="f">D..</span></p><svg class="n"><use href="#e14"/></svg></div>

<!-- row 15 -->
<div class="c a b a17 r15" style="left:755px;width:123px"><svg class="n"><path d="M0 52H55Q95 55 123 71H0Z" fill="rgba(170,240,240,.12)"/><path d="M0 52H55Q95 55 123 71" fill="none" stroke="#9ae8ea" stroke-width="1.600"/></svg><p><svg class="i"><use href="#au"/></svg>FX S..ume</p></div>
<div class="c a b a17 r15" style="left:1853px;width:123px"><svg class="n"><path d="M0 52H55Q95 55 123 71H0Z" fill="rgba(170,240,240,.12)"/><path d="M0 52H55Q95 55 123 71" fill="none" stroke="#9ae8ea" stroke-width="1.600"/></svg><p><svg class="i"><use href="#au"/></svg>FX S..ume</p></div>
<div class="c g gw a27 r15" style="left:1001px;width:108px"><p><svg class="i"><use href="#sa"/></svg>Dro..ust</p><svg class="n"><use href="#w5"/></svg></div>
<div class="c g gw a27 r15" style="left:1221px;width:108px"><p><svg class="i"><use href="#sa"/></svg>Dro..ust</p><svg class="n"><use href="#w5"/></svg></div>
<div class="c g gw a27 r15" style="left:2100px;width:108px"><p><svg class="i"><use href="#sa"/></svg>Dro..ust</p><svg class="n"><use href="#w5"/></svg></div>
<div class="c g gw a27 r15" style="left:2320px;width:108px"><p><svg class="i"><use href="#sa"/></svg>Dro..ust</p><svg class="n"><use href="#w5"/></svg></div>

<!-- row 16 -->
<div class="c a g gw a24 r16" style="left:988px;width:123px"><svg class="n"><path d="M0 52Q35 54 60 64Q90 70 123 71H0Z" fill="rgba(170,240,200,.1)"/><path d="M0 52Q35 54 60 64Q90 70 123 71" fill="none" stroke="#96efc2" stroke-width="1.600"/></svg><p><svg class="i"><use href="#au"/></svg>Dro..lume</p></div>
<div class="c a g gw a24 r16" style="left:1207px;width:123px"><svg class="n"><path d="M0 52Q35 54 60 64Q90 70 123 71H0Z" fill="rgba(170,240,200,.1)"/><path d="M0 52Q35 54 60 64Q90 70 123 71" fill="none" stroke="#96efc2" stroke-width="1.600"/></svg><p><svg class="i"><use href="#au"/></svg>Dro..lume</p></div>
<div class="c a g gw a24 r16" style="left:2087px;width:123px"><svg class="n"><path d="M0 52Q35 54 60 64Q90 70 123 71H0Z" fill="rgba(170,240,200,.1)"/><path d="M0 52Q35 54 60 64Q90 70 123 71" fill="none" stroke="#96efc2" stroke-width="1.600"/></svg><p><svg class="i"><use href="#au"/></svg>Dro..lume</p></div>
<div class="c a g gw a24 r16" style="left:2306px;width:123px"><svg class="n"><path d="M0 52Q35 54 60 64Q90 70 123 71H0Z" fill="rgba(170,240,200,.1)"/><path d="M0 52Q35 54 60 64Q90 70 123 71" fill="none" stroke="#96efc2" stroke-width="1.600"/></svg><p><svg class="i"><use href="#au"/></svg>Dro..lume</p></div>

<!-- row 17 -->
<div class="c g a27 r17" style="left:1001px;width:110px"><p><svg class="i"><use href="#pi"/></svg>Dro..ord</p><svg class="n"><use href="#e17"/></svg></div>
<div class="c g a27 r17" style="left:1111px;width:96px"><p><svg class="i"><use href="#pi"/></svg>Dro..rd</p><svg class="n"><use href="#e17"/></svg></div>
<div class="c g a27 r17" style="left:1221px;width:111px"><p><svg class="i"><use href="#pi"/></svg>Dro..ord</p><svg class="n"><use href="#e17"/></svg></div>
<div class="c g a27 r17" style="left:1332px;width:97px"><p><svg class="i"><use href="#pi"/></svg>Dro..rd</p><svg class="n"><use href="#e17"/></svg></div>
<div class="c g a27 r17" style="left:2100px;width:110px"><p><svg class="i"><use href="#pi"/></svg>Dro..ord</p><svg class="n"><use href="#e17"/></svg></div>
<div class="c g a27 r17" style="left:2210px;width:96px"><p><svg class="i"><use href="#pi"/></svg>Dro..rd</p><svg class="n"><use href="#e17"/></svg></div>
<div class="c g a27 r17" style="left:2320px;width:109px"><p><svg class="i"><use href="#pi"/></svg>Dro..ord</p><svg class="n"><use href="#e17"/></svg></div>
<div class="c g a27 r17" style="left:2429px;width:110px"><p><svg class="i"><use href="#pi"/></svg>Dro..ord</p><svg class="n"><use href="#e17"/></svg></div>

<!-- row 18 -->
<div class="sl r18" style="left:781px;width:10px;background:#4630cf"></div><div class="sl r18" style="left:880px;width:10px;background:#4630cf"></div><div class="sl r18" style="left:992px;width:10px;background:#4630cf"></div><div class="sl r18" style="left:1211px;width:10px;background:#4630cf"></div><div class="sl r18" style="left:1431px;width:10px;background:#4630cf"></div><div class="sl r18" style="left:1880px;width:10px;background:#4630cf"></div><div class="sl r18" style="left:1980px;width:10px;background:#4630cf"></div><div class="sl r18" style="left:2088px;width:10px;background:#4630cf"></div><div class="sl r18" style="left:2309px;width:10px;background:#4630cf"></div>
<svg width="2880" height="1454" style="left:0;top:0"><path fill="#6f60e8" d="M784 1076l5 8l-5 8zM883 1076l5 8l-5 8zM995 1076l5 8l-5 8zM1214 1076l5 8l-5 8zM1434 1076l5 8l-5 8zM1883 1076l5 8l-5 8zM1983 1076l5 8l-5 8zM2091 1076l5 8l-5 8zM2312 1076l5 8l-5 8z"/></svg>

<!-- rows 19-21 -->
<div class="c s p r19" style="left:562px;width:1976px"><p style="letter-spacing:.5px"><svg class="i"><use href="#au"/></svg>RGB 1 VOCAL – Channel volume</p></div>
<div class="c s p r20" style="left:562px;width:1976px"><p style="letter-spacing:1.74px"><svg class="i"><use href="#au"/></svg>FabFilter Simplon – RGB 1 VOCAL – Filter 1 Freq</p></div>
<div class="c s p r21" style="left:562px;width:1976px"><p style="letter-spacing:-.2px"><svg class="i"><use href="#au"/></svg>Replika – RGB 1 VOCAL Mix level</p></div>
<svg width="2880" height="1454" style="left:0;top:0"><g fill="none" stroke="#5c44e6" stroke-width="1.500"><path d="M1800 1126Q1835 1124 1853 1111L1880 1114L1960 1112H2536"/><path d="M1800 1134H1853L1880 1145Q2000 1144 2088 1134H2536"/><path d="M1800 1165H2086L2087 1193H2536"/></g><g fill="none" stroke="#3ee4ea" stroke-width="1.500"><path d="M564 195H2757"/><path d="M564 239H2757"/></g></svg>

<!-- row 22 -->
<div class="c y a16 r22" style="left:782px;width:110px"><p><svg class="i"><use href="#pi"/></svg>Upli..ead</p><svg class="n"><use href="#yd"/></svg></div>
<div class="c y r22" style="left:892px;width:96px"><p><svg class="i"><use href="#pi"/></svg>Upl..ad</p><svg class="n"><use href="#yd"/></svg></div>
<div class="c y a16 r22" style="left:1880px;width:110px"><p><svg class="i"><use href="#pi"/></svg>Upli..ead</p><svg class="n"><use href="#yd"/></svg></div>
<div class="c y r22" style="left:1990px;width:96px"><p><svg class="i"><use href="#pi"/></svg>Upl..ad</p><svg class="n"><use href="#yd"/></svg></div>

<!-- rows 23-28 -->
<div class="c s y yw r23" style="left:768px;width:233px"><p style="letter-spacing:.57px"><svg class="i"><use href="#au"/></svg>FabFilter Si..lter 1 Freq</p></div>
<div class="c s y yw r24" style="left:768px;width:233px"><p style="letter-spacing:.57px"><svg class="i"><use href="#au"/></svg>FabFilter Si..lter 2 Freq</p></div>
<div class="c s y yw r25" style="left:768px;width:233px"><p style="letter-spacing:1.4px"><svg class="i"><use href="#au"/></svg>Uplif Lea..nnel volume</p></div>
<div class="c s y yw r26" style="left:782px;width:206px"><p style="letter-spacing:1.9px"><svg class="i"><use href="#sa"/></svg>Sweep Uplif</p></div>
<div class="c s y yw r27" style="left:768px;width:233px"><p style="letter-spacing:.8px"><svg class="i"><use href="#au"/></svg>Sweep Upl..nel volume</p></div>
<div class="c s y yw r28" style="left:768px;width:233px"><p style="letter-spacing:.4px"><svg class="i"><use href="#au"/></svg>FabFilter Si..ilter 1 Freq</p></div>
<div class="c s y yw r23" style="left:1866px;width:233px"><p style="letter-spacing:.57px"><svg class="i"><use href="#au"/></svg>FabFilter Si..lter 1 Freq</p></div>
<div class="c s y yw r24" style="left:1866px;width:233px"><p style="letter-spacing:.57px"><svg class="i"><use href="#au"/></svg>FabFilter Si..lter 2 Freq</p></div>
<div class="c s y yw r25" style="left:1866px;width:233px"><p style="letter-spacing:1.4px"><svg class="i"><use href="#au"/></svg>Uplif Lea..nnel volume</p></div>
<div class="c s y yw r26" style="left:1880px;width:206px"><p style="letter-spacing:1.9px"><svg class="i"><use href="#sa"/></svg>Sweep Uplif</p></div>
<div class="c s y yw r27" style="left:1866px;width:233px"><p style="letter-spacing:.5px"><svg class="i"><use href="#au"/></svg>Sweep Upli..nel volume</p></div>
<div class="c s y yw r28" style="left:1866px;width:233px"><p style="letter-spacing:.4px"><svg class="i"><use href="#au"/></svg>FabFilter Si..ilter 1 Freq</p></div>
</body></html>
